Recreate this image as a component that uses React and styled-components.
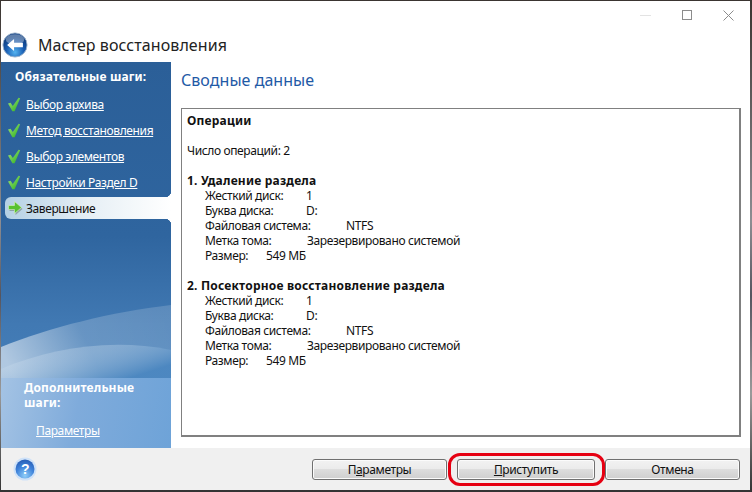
import styled, { createGlobalStyle } from 'styled-components'

const Global = createGlobalStyle`
	html, body {
		margin: 0;
		padding: 0;
	}
	body {
		width: 752px;
		height: 492px;
		overflow: hidden;
		background: linear-gradient(#3a3430, #8d8d92 45%, #55555f 60%, #9a9a9a 80%, #333 100%);
		font-family: "Noto Sans", "Open Sans", sans-serif;
		font-size: 12px;
		letter-spacing: -0.38px;
		color: #111;
	}
`

const Wizard = styled.div`
	margin: 1px 0 0 1px;
	width: 749px;
	height: 489px;
	display: flex;
	flex-direction: column;
	background: #fff;
`

const Caption = styled.header`
	height: 61px;
	flex: none;
	display: flex;
	flex-direction: column;
`

const WindowControls = styled.div`
	display: flex;
	justify-content: flex-end;
	align-items: center;
	gap: 31px;
	height: 28px;
	padding-right: 16px;
	svg {
		display: block;
	}
`

const TitleRow = styled.div`
	display: flex;
	align-items: center;
	gap: 10px;
	height: 29px;
	margin-top: 1px;
	padding-left: 1px;
`

const Title = styled.h1`
	margin: 0;
	font-size: 16px;
	font-weight: 400;
	letter-spacing: 0.08px;
	color: #222;
	white-space: nowrap;
`

const Main = styled.div`
	flex: 1;
	display: flex;
	min-height: 0;
`

const Sidebar = styled.nav`
	position: relative;
	width: 170px;
	flex: none;
	display: flex;
	flex-direction: column;
	overflow: hidden;
	background: linear-gradient(#2b5f98 0%, #2f659f 45%, #4179b3 68%, #4a86c0 100%);
`

const Swoosh = styled.svg`
	position: absolute;
	left: 0;
	top: 0;
	width: 170px;
	height: 386px;
`

const SideHeading = styled.h3`
	position: relative;
	margin: 0;
	padding: ${({ $extra }) => ($extra ? '0 0 0 23px' : '7px 0 0 14px')};
	font-size: 12px;
	line-height: 15px;
	font-weight: 700;
	letter-spacing: 0.15px;
	color: #fff;
`

const Steps = styled.ul`
	position: relative;
	list-style: none;
	margin: 9px 0 0;
	padding: 0;
`

const Step = styled.li`
	position: relative;
	height: 22px;
	margin: 0 0 4px ${({ $active }) => ($active ? '4px' : '0')};
	padding-left: ${({ $active }) => ($active ? '2px' : '6px')};
	display: flex;
	align-items: center;
	gap: ${({ $active }) => ($active ? '2px' : '5px')};
	border-radius: ${({ $active }) => ($active ? '6px 0 0 6px' : '0')};
	background: ${({ $active }) =>
		$active ? 'linear-gradient(90deg, #b4d0e4, #e6eff5 50%, #fff 100%)' : 'none'};

	${({ $active }) =>
		$active &&
		`
		&::before,
		&::after {
			content: '';
			position: absolute;
			right: 0;
			width: 6px;
			height: 6px;
		}
		&::before {
			top: -6px;
			background: radial-gradient(circle at 0 0, transparent 6px, #fff 6.5px);
		}
		&::after {
			bottom: -6px;
			background: radial-gradient(circle at 0 100%, transparent 6px, #fff 6.5px);
		}
	`}
`

const StepLink = styled.a`
	color: #fff;
	font-size: 12px;
	text-decoration: underline;
	white-space: nowrap;
`

const CurrentStep = styled.span`
	color: #111;
	font-size: 12px;
`

const ExtraPanel = styled.div`
	position: relative;
	box-sizing: border-box;
	margin-top: auto;
	height: 70px;
	padding-top: 2px;
	background: linear-gradient(100deg, #a4c3e4 0%, #7fabdb 45%, #6ea3d8 100%);
`

const ExtraLink = styled.a`
	display: block;
	margin: 12px 0 0 35px;
	color: #fff;
	font-size: 12px;
	text-decoration: underline;
`

const Content = styled.section`
	flex: 1;
	display: flex;
	flex-direction: column;
	padding: 6px 9px 11px 10px;
	min-width: 0;
`

const PageTitle = styled.h2`
	margin: 0 0 16px;
	font-size: 16px;
	line-height: 24px;
	font-weight: 400;
	letter-spacing: 0.05px;
	color: #1f5aa6;
`

const Summary = styled.div`
	flex: 1;
	border: 2px solid #808080;
	border-width: 1px 2px 2px 1px;
	padding: 4px 4px 0 5px;
	line-height: 15px;
`

const Strong = styled.div`
	font-weight: 700;
	letter-spacing: 0.2px;
	margin-top: ${({ $top }) => $top || 0}px;
	margin-bottom: ${({ $gap }) => $gap || 0}px;
`

const Line = styled.div`
	margin-bottom: ${({ $gap }) => $gap || 0}px;
`

const Detail = styled.div`
	display: flex;
	padding-left: 18px;
`

const DetailLabel = styled.span`
	width: ${({ $w }) => $w}px;
	flex: none;
`

const Footer = styled.footer`
	height: 42px;
	flex: none;
	display: flex;
	align-items: center;
	background: #f0f0f0;
	padding: 0 10px 0 12px;
`

const Buttons = styled.div`
	margin-left: auto;
	display: flex;
	gap: 10px;
`

const Button = styled.button`
	position: relative;
	width: ${({ $wide }) => ($wide ? '138px' : '135px')};
	height: 21px;
	padding: 0;
	border: 1px solid #707070;
	border-radius: 3px;
	background: linear-gradient(#f2f2f2 0%, #ebebeb 48%, #dddddd 50%, #cfcfcf 100%);
	box-shadow: inset 0 0 0 1px #fbfbfb;
	font: inherit;
	letter-spacing: inherit;
	font-size: 12px;
	color: #111;
	u {
		text-underline-offset: 1px;
	}
`

const Highlight = styled.span`
	position: absolute;
	inset: -7px -11px -7px -10px;
	border: 3px solid #e60012;
	border-radius: 12px;
	pointer-events: none;
`

const details = [
	{ label: 'Жесткий диск:', w: 101, value: '1' },
	{ label: 'Буква диска:', w: 101, value: 'D:' },
	{ label: 'Файловая система:', w: 141, value: 'NTFS' },
	{ label: 'Метка тома:', w: 102, value: 'Зарезервировано системой' },
	{ label: 'Размер:', w: 61, value: '549 МБ' },
]

const steps = ['Выбор архива', 'Метод восстановления', 'Выбор элементов', 'Настройки Раздел D']

const BackIcon = () => (
	<svg width="26" height="26" viewBox="0 0 28 28">
		<defs>
			<radialGradient id="backFill" cx="50%" cy="80%" r="65%">
				<stop offset="0" stopColor="#55b4f0" />
				<stop offset="0.55" stopColor="#1a5fb4" />
				<stop offset="1" stopColor="#0c3c80" />
			</radialGradient>
		</defs>
		<circle cx="14" cy="14" r="13" fill="url(#backFill)" stroke="#9fb4cc" />
		<ellipse cx="14" cy="8" rx="10" ry="5.5" fill="#fff" opacity="0.35" />
		<path d="M5.5 14l7.5-6.5v4h9.5v5H13v4z" fill="#fff" />
	</svg>
)

const CheckIcon = () => (
	<svg width="14" height="15" viewBox="0 0 14 15">
		<defs>
			<linearGradient id="checkFill" x1="0" x2="1" y1="0" y2="1">
				<stop offset="0" stopColor="#a6e878" />
				<stop offset="1" stopColor="#27ad1d" />
			</linearGradient>
		</defs>
		<path d="M1 6.5l2.6-.8 2.2 3.4L11.6.8l1.6.4-5.6 13H5.4z" fill="url(#checkFill)" />
	</svg>
)

const NextIcon = () => (
	<svg width="17" height="16" viewBox="0 0 17 16">
		<path d="M2 6h6V2l7 6-7 6v-4H2z" fill="#5a6b5a" opacity="0.45" transform="translate(0.5 1)" />
		<path d="M1.5 5.5h6V1.5l7 6-7 6v-4h-6z" fill="#58c22e" stroke="#d8f0c0" strokeWidth="0.6" />
	</svg>
)

const HelpIcon = () => (
	<svg width="24" height="24" viewBox="0 0 24 24">
		<defs>
			<radialGradient id="helpFill" cx="50%" cy="85%" r="80%">
				<stop offset="0" stopColor="#8fcdf8" />
				<stop offset="0.6" stopColor="#3f83da" />
				<stop offset="1" stopColor="#2a62bb" />
			</radialGradient>
		</defs>
		<circle cx="12" cy="12" r="11.5" fill="#cfe2f8" />
		<circle cx="12" cy="12" r="9.5" fill="url(#helpFill)" />
		<text
			x="12"
			y="17"
			textAnchor="middle"
			fontSize="14"
			fontWeight="700"
			fill="#fff"
			fontFamily="Liberation Sans, sans-serif"
		>
			?
		</text>
	</svg>
)

const OperationDetails = () => (
	<>
		{details.map((d) => (
			<Detail key={d.label}>
				<DetailLabel $w={d.w}>{d.label}</DetailLabel>
				<span>{d.value}</span>
			</Detail>
		))}
	</>
)

export default function App() {
	return (
		<>
			<Global />
			<Wizard>
				<Caption>
					<WindowControls>
						<svg width="11" height="1">
							<rect width="11" height="1" fill="#e3e3e3" />
						</svg>
						<svg width="10" height="10">
							<rect x="0.5" y="0.5" width="9" height="9" fill="none" stroke="#8c8c8c" />
						</svg>
						<svg width="11" height="11">
							<path d="M0.5 0.5l10 10M10.5 0.5l-10 10" stroke="#8c8c8c" fill="none" />
						</svg>
					</WindowControls>
					<TitleRow>
						<BackIcon />
						<Title>Мастер восстановления</Title>
					</TitleRow>
				</Caption>
				<Main>
					<Sidebar>
						<Swoosh viewBox="0 0 170 386">
							<defs>
								<linearGradient id="swooshFill" x1="0" x2="1" y1="0.6" y2="0.4">
									<stop offset="0" stopColor="#fff" stopOpacity="0.58" />
									<stop offset="0.5" stopColor="#fff" stopOpacity="0.2" />
									<stop offset="1" stopColor="#fff" stopOpacity="0.16" />
								</linearGradient>
								<linearGradient id="swooshFade" x1="0" x2="1" y1="0" y2="0.6">
									<stop offset="0" stopColor="#fff" stopOpacity="0.1" />
									<stop offset="1" stopColor="#4a86c0" stopOpacity="0.9" />
								</linearGradient>
							</defs>
							<path d="M0 285C50 265 110 250 170 243V316H0z" fill="url(#swooshFill)" />
							<path d="M0 307C50 286 110 276 170 288V316H0z" fill="url(#swooshFade)" />
						</Swoosh>
						<SideHeading>Обязательные шаги:</SideHeading>
						<Steps>
							{steps.map((s) => (
								<Step key={s}>
									<CheckIcon />
									<StepLink>{s}</StepLink>
								</Step>
							))}
							<Step $active>
								<NextIcon />
								<CurrentStep>Завершение</CurrentStep>
							</Step>
						</Steps>
						<ExtraPanel>
							<SideHeading $extra>
								Дополнительные
								<br />
								шаги:
							</SideHeading>
							<ExtraLink>Параметры</ExtraLink>
						</ExtraPanel>
					</Sidebar>
					<Content>
						<PageTitle>Сводные данные</PageTitle>
						<Summary>
							<Strong $gap={15}>Операции</Strong>
							<Line $gap={15}>Число операций: 2</Line>
							<Strong>1. Удаление раздела</Strong>
							<OperationDetails />
							<Strong $top={15}>2. Посекторное восстановление раздела</Strong>
							<OperationDetails />
						</Summary>
					</Content>
				</Main>
				<Footer>
					<HelpIcon />
					<Buttons>
						<Button>
							П<u>а</u>раметры
						</Button>
						<Button $wide>
							<u>П</u>риступить
							<Highlight />
						</Button>
						<Button>Отмена</Button>
					</Buttons>
				</Footer>
			</Wizard>
		</>
	)
}
